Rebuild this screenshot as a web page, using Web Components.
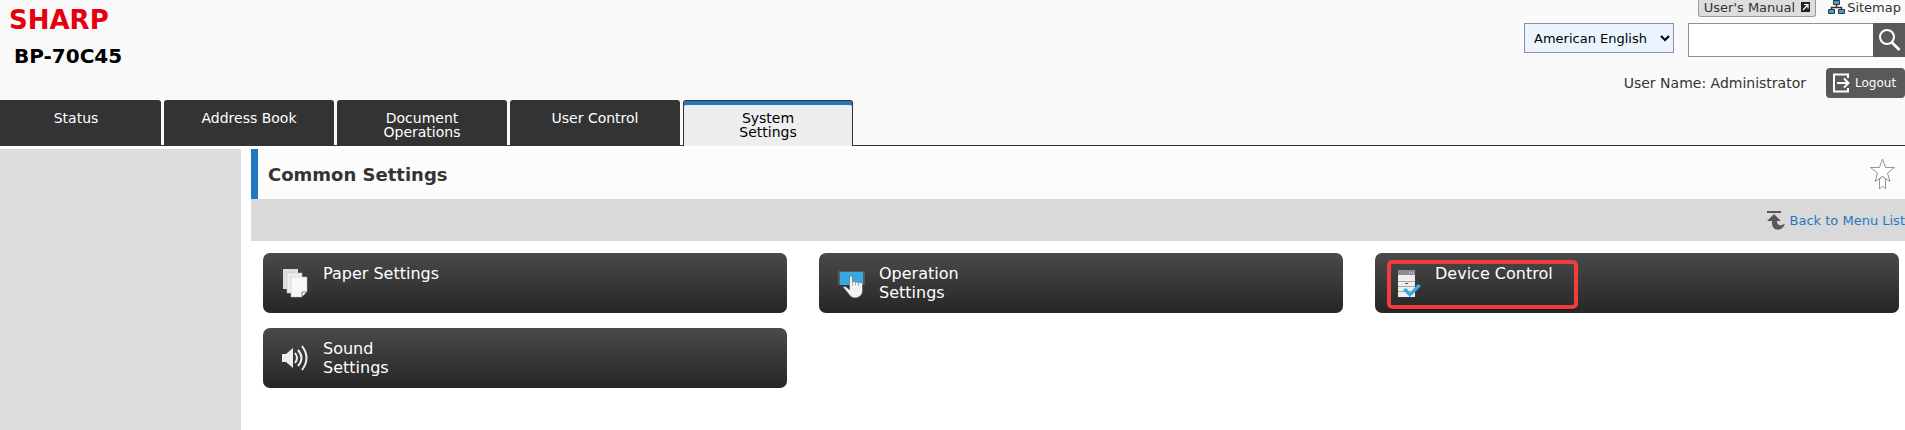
<!DOCTYPE html>
<html lang="en">
<head>
<meta charset="utf-8">
<title>BP-70C45</title>
<style>
    body {
        margin: 0;
        min-height: 100vh;
        display: flex;
        flex-direction: column;
        background: #fff;
        color: #333;
        font: 13px/16px "DejaVu Sans", sans-serif;
    }

    .layout {
        display: flex;
        flex: 1;
        gap: 10px;
        margin-top: 3px;
    }

    aside {
        width: 241px;
        flex: none;
        background: #dcdcdc;
    }

    main {
        flex: 1;
    }
</style>
</head>
<body>
<page-header model="BP-70C45" user="Administrator"></page-header>
<tab-bar>
    <tab-item>Status</tab-item>
    <tab-item>Address Book</tab-item>
    <tab-item>Document<br>Operations</tab-item>
    <tab-item>User Control</tab-item>
    <tab-item is-current>System<br>Settings</tab-item>
</tab-bar>
<div class="layout">
    <aside></aside>
    <main>
        <page-title>Common Settings</page-title>
        <menu-bar>Back to Menu List</menu-bar>
        <menu-grid>
            <menu-card icon="paper">Paper Settings</menu-card>
            <menu-card icon="operation">Operation<br>Settings</menu-card>
            <menu-card icon="device" is-marked>Device Control</menu-card>
            <menu-card icon="sound">Sound<br>Settings</menu-card>
        </menu-grid>
    </main>
</div>

<script>
// Define an element whose shadow root holds the given markup
function define(name, html, ready) {
    const template = document.createElement("template");
    template.innerHTML = html;
    customElements.define(name, class extends HTMLElement {
        constructor() {
            super();
            this.attachShadow({ mode: "open" });
            this.shadowRoot.append(template.content.cloneNode(true));
        }

        connectedCallback() {
            if (ready) ready(this, this.shadowRoot);
        }
    });
}

// Header
define("page-header", /*html*/ `
<style>
    :host {
        display: flex;
        justify-content: space-between;
        height: 100px;
        background: repeating-linear-gradient(#f9f9f9 0 4px, #fbfbfb 4px 6px);
    }

    .brand {
        padding: 8px 0 0 9px;
    }

    .logo {
        display: block;
        color: #e6000d;
        font-size: 26px;
        font-weight: bold;
        line-height: 24px;
        text-decoration: none;
    }

    h1 {
        margin: 12px 0 0 5px;
        color: #000;
        font-size: 20px;
        line-height: 24px;
    }

    .tools {
        display: flex;
        flex-direction: column;
        align-items: flex-end;
    }

    .links, .search, .user {
        display: flex;
    }

    .links {
        gap: 12px;
        height: 17px;
        line-height: 16px;
        padding-right: 4px;
    }

    .links a {
        display: flex;
        color: #333;
        text-decoration: none;
    }

    .manual {
        box-sizing: border-box;
        gap: 6px;
        padding: 0 5px;
        background: #ddd;
        border: 1px solid #999;
        border-top: 0;
        border-radius: 0 0 3px 3px;
    }

    .manual svg {
        margin-top: 2px;
    }

    .sitemap {
        gap: 2px;
    }

    .search {
        align-items: flex-start;
        margin-top: 6px;
    }

    select {
        width: 150px;
        height: 30px;
        margin-right: 14px;
        padding: 0 0 0 5px;
        border: 1px solid #8f9099;
        border-radius: 0;
        background-color: #ebf3ff;
        color: #000;
        font: inherit;
    }

    input {
        box-sizing: border-box;
        width: 185px;
        height: 34px;
        border: 1px solid #8f9099;
        border-right: 0;
        background: #fff;
        font: inherit;
    }

    button {
        display: flex;
        align-items: center;
        border: 0;
        background: #595959;
        color: #fff;
        font: inherit;
    }

    .find {
        width: 32px;
        height: 34px;
        padding: 0 0 0 6px;
    }

    .user {
        align-items: center;
        gap: 20px;
        margin-top: 11px;
        font-size: 14px;
    }

    .logout {
        gap: 5px;
        width: 79px;
        height: 30px;
        padding: 0 0 0 7px;
        border-radius: 4px;
        font-size: 12px;
    }

    svg {
        flex: none;
    }
</style>

<div class="brand">
    <a class="logo" href="#">SHARP</a>
    <h1></h1>
</div>
<div class="tools">
    <div class="links">
        <a class="manual" href="#">User's Manual
            <svg width="9" height="10" viewBox="0 0 9 10"><path d="M0 0h9v10H0z" fill="#222"/><path d="M2 8l4.500-5M3 2.500h4v4" fill="none" stroke="#fff" stroke-width="1.200"/></svg>
        </a>
        <a class="sitemap" href="#">
            <svg width="17" height="14" viewBox="0 0 17 14"><path d="M8.500 4v4M3.500 10V7.500h10V10" fill="none" stroke="#333" stroke-width="1.500"/><path d="M5.500.5h6v4h-6zM.5 9.500h6v4h-6zM10.500 9.500h6v4h-6z" fill="#3ba0dc" stroke="#333"/></svg>
            Sitemap
        </a>
    </div>
    <div class="search">
        <select aria-label="Language"><option>American English</option></select>
        <input type="text" aria-label="Search">
        <button class="find" aria-label="Search">
            <svg width="22" height="24" viewBox="0 0 22 24"><circle cx="8" cy="9" r="7" fill="none" stroke="#fff" stroke-width="2"/><path d="M12.500 14L20.500 22" stroke="#fff" stroke-width="2.600"/></svg>
        </button>
    </div>
    <div class="user">
        <span class="name"></span>
        <button class="logout">
            <svg width="17" height="20" viewBox="0 0 17 20"><path d="M15 5V1.500H1v17h14V15M4 10h11M11 5.500l4.500 4.500-4.500 4.500" fill="none" stroke="#fff" stroke-width="2"/></svg>
            Logout
        </button>
    </div>
</div>
`, (host, root) => {
    root.querySelector("h1").textContent = host.getAttribute("model");
    root.querySelector(".name").textContent = "User Name: " + host.getAttribute("user");
});

// Tabs
define("tab-bar", /*html*/ `
<style>
    :host {
        display: block;
        background: #f9f9f9;
    }

    nav {
        display: flex;
        gap: 3px;
        height: 46px;
        background: linear-gradient(#333, #333) bottom / 100% 1px no-repeat;
    }
</style>
<nav><slot></slot></nav>
`);

define("tab-item", /*html*/ `
<style>
    :host {
        display: block;
        width: 170px;
    }

    :host(:first-child) {
        width: 161px;
    }

    a {
        display: block;
        box-sizing: border-box;
        height: 100%;
        padding-top: 11px;
        border-radius: 3px 3px 0 0;
        background: #333;
        color: #fff;
        font-size: 14px;
        line-height: 14px;
        text-align: center;
        text-decoration: none;
    }

    :host(:first-child) a {
        padding-right: 9px;
        border-top-left-radius: 0;
    }

    :host([is-current]) a {
        padding-top: 10px;
        border: 1px solid #333;
        border-bottom: 0;
        background: #eee;
        box-shadow: inset 0 4px #1f78c1;
        color: #000;
    }
</style>
<a href="#"><slot></slot></a>
`);

// Title row with the favourite button
define("page-title", /*html*/ `
<style>
    :host {
        display: flex;
        align-items: center;
        justify-content: space-between;
        box-sizing: border-box;
        height: 50px;
        padding: 0 10px;
        border-left: 7px solid #1f78c1;
        background: #fcfcfc;
    }

    h2 {
        margin: 0;
        font-size: 18px;
        line-height: 24px;
        padding-top: 2px;
    }

    button {
        display: flex;
        padding: 0;
        border: 0;
        background: none;
    }
</style>
<h2><slot></slot></h2>
<button aria-label="Add to favorites">
    <svg width="25" height="32" viewBox="0 0 25 32"><path d="M12.500 1l3 8.500h9l-7 5.500 2.500 8.500-7.500-5-7.500 5L7.500 15l-7-5.500h9z" fill="#fff" stroke="#9a9292"/><path d="M9.500 21v10l3-3 3 3V21l-3-2.500z" fill="#fff" stroke="#9a9292"/></svg>
</button>
`);

define("menu-bar", /*html*/ `
<style>
    :host {
        display: flex;
        align-items: center;
        justify-content: flex-end;
        box-sizing: border-box;
        height: 42px;
        padding-top: 2px;
        background: #d9d9d9;
    }

    a {
        display: flex;
        align-items: center;
        gap: 5px;
        color: #1f78c1;
        text-decoration: none;
    }
</style>
<a href="#">
    <svg width="18" height="20" viewBox="0 0 18 20"><path d="M0 0h14v2H0zM7 3l7 7h-4c0 4 3 6 8 2.500-2 8-13 8.500-13-.5V10H0z" fill="#5c5757"/></svg>
    <slot></slot>
</a>
`);

define("menu-grid", /*html*/ `
<style>
    :host {
        display: grid;
        grid-template-columns: repeat(3, 1fr);
        gap: 15px 32px;
        padding: 12px 6px 12px 12px;
    }
</style>
<slot></slot>
`);

// Card icons, all on a 29x30 box
const icons = {
    paper: `
        <path d="M1 1h15v20H1z" fill="#ddd"/>
        <path d="M5 5h15v20H5z" fill="#eee" stroke="#c4bcbc" stroke-width=".5"/>
        <path d="M9 9h16v15l-5 5H9z" fill="#f8f8f8" stroke="#c4bcbc" stroke-width=".5"/>
        <path d="M25 24h-5v5z" fill="#fff" stroke="#555" stroke-width=".8"/>`,
    operation: `
        <path d="M0 3h27v14H0z" fill="#5a5a5a"/>
        <path d="M2 4h23v13H2z" fill="#38a8e0"/>
        <path d="M11.500 20V9q1.500-2 3 0v5q1.500-1.500 3 .5 1.500-1.500 3 .5 1.500-1.500 4 .5v7c0 8-10 9.500-13 4.500L5 19q2.500-2 6.500 3z" fill="#f2f2f2" stroke="#444" stroke-width=".5"/>
        <path d="M14.500 14v3.500M17.500 14.500v3M20.500 15v3" stroke="#999" stroke-width=".8"/>`,
    device: `
        <path d="M4 2h17v5H4z" fill="#8d8d91"/>
        <path d="M15 5h5" stroke="#ddd" stroke-dasharray="1 1"/>
        <path d="M4 7h17v22H4z" fill="#eee"/>
        <path d="M4 13.500h17M4 18.500h17M4 23.500h17" stroke="#aaa"/>
        <path d="M11 15.500h3" stroke="#555"/>
        <path d="M9 22l3-2 4 4.500 8-8.500 3 2-11 11z" fill="#38a8e0"/>`,
    sound: `
        <path d="M0 11h4l7-6v20l-7-6H0z" fill="#eee"/>
        <path d="M13 10q4 5 0 10M16 7q7 8 0 16M20 3q9 12 0 24" fill="none" stroke="#eee" stroke-width="2"/>`
};

define("menu-card", /*html*/ `
<style>
    :host {
        display: block;
        position: relative;
    }

    a {
        display: flex;
        box-sizing: border-box;
        height: 60px;
        padding: 11px 19px;
        gap: 12px;
        border-radius: 7px;
        background: linear-gradient(#4a4a4a, #262626);
        color: #fff;
        font-size: 16px;
        line-height: 19px;
        text-decoration: none;
    }

    svg {
        flex: none;
        margin-top: 4px;
    }

    .mark {
        display: none;
        position: absolute;
        top: 7px;
        left: 12px;
        box-sizing: border-box;
        width: 191px;
        height: 49px;
        border: 4px solid #f03c3c;
        border-radius: 5px;
        box-shadow: 0 1px #111;
        pointer-events: none;
    }

    :host([is-marked]) .mark {
        display: block;
    }
</style>
<a href="#">
    <svg width="29" height="30" viewBox="0 0 29 30"></svg>
    <span><slot></slot></span>
</a>
<div class="mark"></div>
`, (host, root) => {
    root.querySelector("svg").innerHTML = icons[host.getAttribute("icon")];
});
</script>
</body>
</html>
